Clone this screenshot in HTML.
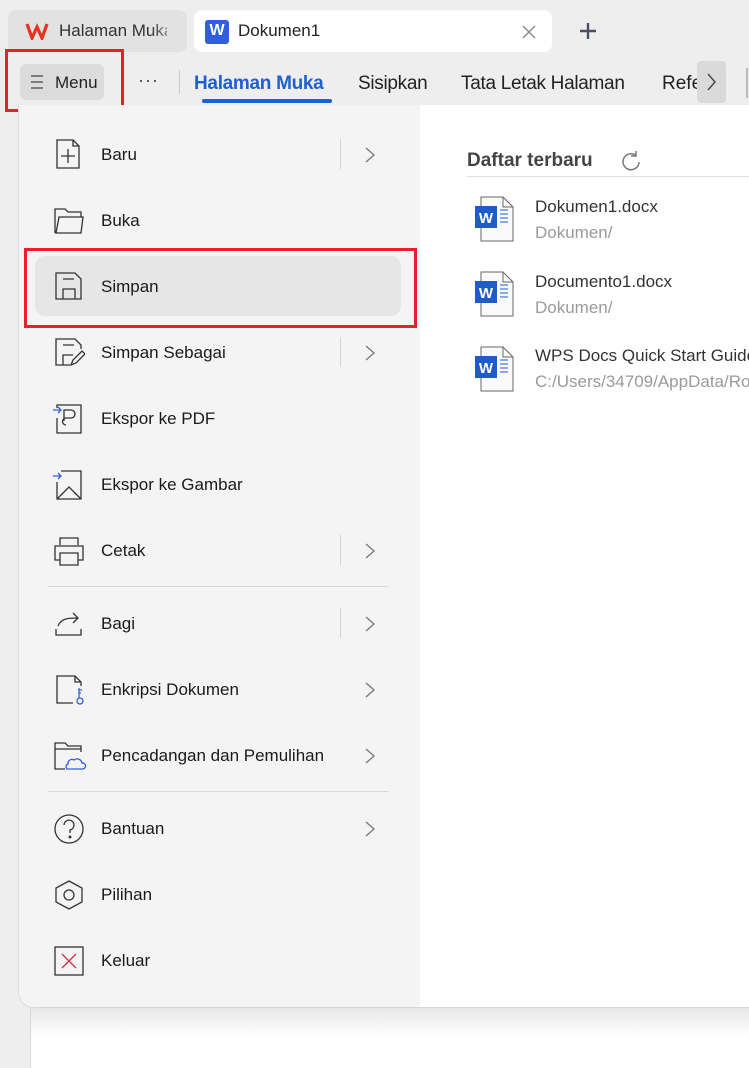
<!DOCTYPE html>
<html><head><style>
*{margin:0;padding:0;box-sizing:border-box}
html,body{width:749px;height:1068px;overflow:hidden}
body{background:#eeeeee;font-family:"Liberation Sans",sans-serif;position:relative;color:#222}
.abs{position:absolute}
.mi{position:absolute;left:0;width:400px;height:40px}
.mi .t{position:absolute;left:101px;top:11px;font-size:17px;color:#1a1a1a;white-space:nowrap}
.mi svg.ic{position:absolute;left:53px;top:5px}
.chev{position:absolute;left:364px;top:12px}
.vs{position:absolute;left:340px;top:5px;width:1px;height:30px;background:#d4d4d4}
.f{position:absolute;left:475px}
.fn{position:absolute;left:535px;font-size:17px;color:#333;white-space:nowrap;width:214px;overflow:hidden}
.fp{position:absolute;left:535px;font-size:17px;color:#9a9a9a;white-space:nowrap;width:214px;overflow:hidden}
</style></head><body>
<!-- tabs -->
<div class="abs" style="left:8px;top:10px;width:179px;height:42px;background:#e2e2e2;border-radius:8px"></div>
<svg class="abs" style="left:25px;top:22px" width="24" height="18" viewBox="0 0 24 18"><path d="M2 2 L7 16 L12 5 L17 16 L22 2" fill="none" stroke="#e8321e" stroke-width="3.2"/></svg>
<div class="abs" style="left:59px;top:21px;font-size:17px;color:#333;width:108px;overflow:hidden;white-space:nowrap">Halaman Muka</div>
<div class="abs" style="left:150px;top:14px;width:35px;height:34px;background:linear-gradient(90deg,rgba(226,226,226,0),#e2e2e2)"></div>
<div class="abs" style="left:194px;top:10px;width:358px;height:42px;background:#fff;border-radius:8px"></div>
<div class="abs" style="left:205px;top:20px;width:24px;height:24px;background:#2f5fe0;border-radius:3px;color:#fff;font-weight:bold;font-size:16px;text-align:center;line-height:22px">W</div>
<div class="abs" style="left:238px;top:21px;font-size:17px;color:#222">Dokumen1</div>
<svg class="abs" style="left:521px;top:24px" width="16" height="16"><path d="M2 2L14 14M14 2L2 14" stroke="#888" stroke-width="1.4"/></svg>
<svg class="abs" style="left:578px;top:21px" width="20" height="20"><path d="M10 2V18M2 10H18" stroke="#4a5060" stroke-width="2.4"/></svg>
<!-- ribbon -->
<div class="abs" style="left:20px;top:64px;width:84px;height:36px;background:#dcdcdc;border-radius:6px"></div>
<svg class="abs" style="left:30px;top:74px" width="14" height="16"><path d="M1 2H13M1 8H13M1 14H13" stroke="#444" stroke-width="1.2"/></svg>
<div class="abs" style="left:55px;top:73px;font-size:17px;color:#222">Menu</div>
<div class="abs" style="left:5px;top:49px;width:119px;height:63px;border:3px solid #e8202a"></div>
<div class="abs" style="left:138px;top:70px;font-size:18px;color:#444;letter-spacing:1px">···</div>
<div class="abs" style="left:179px;top:70px;width:1px;height:24px;background:#ccc"></div>
<div class="abs" style="left:194px;top:73px;font-size:19px;color:#1f5fd0;font-weight:bold;letter-spacing:-0.3px">Halaman Muka</div>
<div class="abs" style="left:202px;top:99px;width:130px;height:4px;background:#1f5fd0;border-radius:2px"></div>
<div class="abs" style="left:358px;top:73px;font-size:19px;color:#222;letter-spacing:-0.3px">Sisipkan</div>
<div class="abs" style="left:461px;top:73px;font-size:19px;color:#222;white-space:nowrap;letter-spacing:-0.3px">Tata Letak Halaman</div>
<div class="abs" style="left:662px;top:73px;font-size:19px;color:#222;width:36px;overflow:hidden;white-space:nowrap">Referensi</div>
<div class="abs" style="left:697px;top:61px;width:29px;height:42px;background:#dadada;border-radius:4px"></div>
<svg class="abs" style="left:705px;top:72px" width="12" height="20"><path d="M3 2L10 10L3 18" fill="none" stroke="#444" stroke-width="1.4"/></svg>
<div class="abs" style="left:746px;top:68px;width:2px;height:30px;background:#bbb"></div>
<!-- doc area -->
<div class="abs" style="left:30px;top:105px;width:719px;height:963px;background:#fff;border-left:1px solid #d8d8d8"></div>
<div class="abs" style="left:31px;top:1008px;width:718px;height:30px;background:linear-gradient(#e8e8e8,#fff)"></div>
<!-- popup -->
<div class="abs" style="left:18px;top:105px;width:731px;height:903px;background:#fff;border-radius:0 0 0 16px;border-left:1px solid #ddd;border-bottom:1px solid #d6d6d6;overflow:hidden">
 <div class="abs" style="left:0;top:0;width:401px;height:903px;background:#f4f4f4"></div>
</div>
<div class="abs" style="left:35px;top:256px;width:366px;height:60px;background:#e6e6e6;border-radius:10px"></div>
<div class="abs" style="left:24px;top:248px;width:393px;height:80px;border:3px solid #e8202a"></div>
<div class="abs" style="left:48px;top:586px;width:340px;height:1px;background:#d8d8d8"></div>
<div class="abs" style="left:48px;top:791px;width:340px;height:1px;background:#d8d8d8"></div>

<div class="mi" style="top:134px"><svg class="ic" width="30" height="30" viewBox="0 0 30 30" fill="none" stroke="#333" stroke-width="1.3"><path d="M4 1H20L26 7V29H4Z M20 1V7H26 M15 10V24 M8 17H22"/></svg><span class="t">Baru</span><div class="vs"></div><svg class="chev" width="12" height="18"><path d="M2 2L10 9L2 16" fill="none" stroke="#777" stroke-width="1.3"/></svg></div>
<div class="mi" style="top:200px"><svg class="ic" width="32" height="30" viewBox="0 0 32 30" fill="none" stroke="#333" stroke-width="1.3"><path d="M2 28V4H12L15 7H28V12 M2 28H28L30 12H6L3 28"/></svg><span class="t">Buka</span></div>
<div class="mi" style="top:266px"><svg class="ic" width="30" height="30" viewBox="0 0 30 30" fill="none" stroke="#333" stroke-width="1.3"><path d="M3 2H22L28 8V28H3Z M10 8H21 M10 28V18H22V28"/></svg><span class="t">Simpan</span></div>
<div class="mi" style="top:332px"><svg class="ic" width="32" height="32" viewBox="0 0 32 32" fill="none" stroke="#333" stroke-width="1.3"><path d="M17 28H3V2H22L28 8V12 M10 8H21 M10 28V18H20 M18 28L20 23L29 14L32 17L23 26Z"/></svg><span class="t">Simpan Sebagai</span><div class="vs"></div><svg class="chev" width="12" height="18"><path d="M2 2L10 9L2 16" fill="none" stroke="#777" stroke-width="1.3"/></svg></div>
<div class="mi" style="top:398px"><svg class="ic" width="32" height="32" viewBox="0 0 32 32" fill="none" stroke="#333" stroke-width="1.3"><path d="M4 15V30H28V2H4V5 M11 18V7H18A4 4 0 0 1 18 15H13A3 3 0 0 0 13 22"/><path d="M0 7H8M5 4L8 7L5 10" stroke="#2f5fe0"/></svg><span class="t">Ekspor ke PDF</span></div>
<div class="mi" style="top:464px"><svg class="ic" width="32" height="32" viewBox="0 0 32 32" fill="none" stroke="#333" stroke-width="1.3"><path d="M4 13V30H28V2H8 M4 30L16 18L28 30"/><path d="M0 7H8M5 4L8 7L5 10" stroke="#2f5fe0"/></svg><span class="t">Ekspor ke Gambar</span></div>
<div class="mi" style="top:530px"><svg class="ic" width="32" height="32" viewBox="0 0 32 32" fill="none" stroke="#333" stroke-width="1.3"><path d="M7 10V3H25V10 M7 25H2V11H30V25H25 M7 18H25V30H7Z"/></svg><span class="t">Cetak</span><div class="vs"></div><svg class="chev" width="12" height="18"><path d="M2 2L10 9L2 16" fill="none" stroke="#777" stroke-width="1.3"/></svg></div>
<div class="mi" style="top:603px"><svg class="ic" width="32" height="32" viewBox="0 0 32 32" fill="none" stroke="#333" stroke-width="1.3"><path d="M3 21V27H28V21 M5 18C8 10 16 10 25 10 M20 5L25 10L20 15"/></svg><span class="t">Bagi</span><div class="vs"></div><svg class="chev" width="12" height="18"><path d="M2 2L10 9L2 16" fill="none" stroke="#777" stroke-width="1.3"/></svg></div>
<div class="mi" style="top:669px"><svg class="ic" width="32" height="32" viewBox="0 0 32 32" fill="none" stroke="#333" stroke-width="1.3"><path d="M20 29H4V2H22L28 8V12 M22 2V8H28"/><path d="M26 14V24 M26 16H29 M26 19H28 M24 27A3 3 0 1 0 30 27A3 3 0 1 0 24 27" stroke="#2f5fe0"/></svg><span class="t">Enkripsi Dokumen</span><svg class="chev" width="12" height="18"><path d="M2 2L10 9L2 16" fill="none" stroke="#777" stroke-width="1.3"/></svg></div>
<div class="mi" style="top:735px"><svg class="ic" width="34" height="32" viewBox="0 0 34 32" fill="none" stroke="#333" stroke-width="1.3"><path d="M12 29H2V3H12L15 6H28V12 M2 9H28"/><path d="M14 29H30A3 3 0 0 0 29 23A5 5 0 0 0 21 20A4 4 0 0 0 15 24A3 3 0 0 0 14 29Z" stroke="#2f5fe0"/></svg><span class="t">Pencadangan dan Pemulihan</span><svg class="chev" width="12" height="18"><path d="M2 2L10 9L2 16" fill="none" stroke="#777" stroke-width="1.3"/></svg></div>
<div class="mi" style="top:808px"><svg class="ic" width="32" height="32" viewBox="0 0 32 32" fill="none" stroke="#333" stroke-width="1.3"><circle cx="16" cy="16" r="14"/><path d="M11 12A5 5 0 1 1 17 17V20"/><circle cx="17" cy="24" r="0.8" fill="#333"/></svg><span class="t">Bantuan</span><svg class="chev" width="12" height="18"><path d="M2 2L10 9L2 16" fill="none" stroke="#777" stroke-width="1.3"/></svg></div>
<div class="mi" style="top:874px"><svg class="ic" width="32" height="32" viewBox="0 0 32 32" fill="none" stroke="#333" stroke-width="1.3"><path d="M16 2L29 9V23L16 30L3 23V9Z"/><circle cx="16" cy="16" r="5"/></svg><span class="t">Pilihan</span></div>
<div class="mi" style="top:940px"><svg class="ic" width="32" height="32" viewBox="0 0 32 32" fill="none" stroke-width="1.3"><rect x="2" y="2" width="28" height="28" stroke="#333"/><path d="M9 9L23 23M23 9L9 23" stroke="#d0304a"/></svg><span class="t">Keluar</span></div>

<!-- right pane -->
<div class="abs" style="left:467px;top:150px;font-size:19px;font-weight:bold;color:#444">Daftar terbaru</div>
<svg class="abs" style="left:619px;top:149px" width="24" height="24" viewBox="0 0 24 24" fill="none" stroke="#777" stroke-width="1.5"><path d="M20 12A8 8 0 1 1 17 5.5 M17 1V6H12" transform="translate(0,1)"/></svg>
<div class="abs" style="left:467px;top:176px;width:282px;height:1px;background:#ddd"></div>

<svg class="f" style="top:196px" width="40" height="46" viewBox="0 0 40 46"><path d="M6 1H28L38 11V45H6Z" fill="#fafafa" stroke="#666" stroke-width="1"/><path d="M28 1V11H38" fill="none" stroke="#666"/><rect x="0" y="10" width="22" height="22" fill="#1f5cc8"/><text x="11" y="27" font-family="Liberation Sans" font-weight="bold" font-size="15" fill="#fff" text-anchor="middle">W</text><path d="M25 14H33M25 18H33M25 22H33M25 26H33" stroke="#1f5cc8" stroke-width="1"/></svg>
<div class="fn" style="top:197px">Dokumen1.docx</div><div class="fp" style="top:223px">Dokumen/</div>
<svg class="f" style="top:271px" width="40" height="46" viewBox="0 0 40 46"><path d="M6 1H28L38 11V45H6Z" fill="#fafafa" stroke="#666" stroke-width="1"/><path d="M28 1V11H38" fill="none" stroke="#666"/><rect x="0" y="10" width="22" height="22" fill="#1f5cc8"/><text x="11" y="27" font-family="Liberation Sans" font-weight="bold" font-size="15" fill="#fff" text-anchor="middle">W</text><path d="M25 14H33M25 18H33M25 22H33M25 26H33" stroke="#1f5cc8" stroke-width="1"/></svg>
<div class="fn" style="top:272px">Documento1.docx</div><div class="fp" style="top:298px">Dokumen/</div>
<svg class="f" style="top:346px" width="40" height="46" viewBox="0 0 40 46"><path d="M6 1H28L38 11V45H6Z" fill="#fafafa" stroke="#666" stroke-width="1"/><path d="M28 1V11H38" fill="none" stroke="#666"/><rect x="0" y="10" width="22" height="22" fill="#1f5cc8"/><text x="11" y="27" font-family="Liberation Sans" font-weight="bold" font-size="15" fill="#fff" text-anchor="middle">W</text><path d="M25 14H33M25 18H33M25 22H33M25 26H33" stroke="#1f5cc8" stroke-width="1"/></svg>
<div class="fn" style="top:346px">WPS Docs Quick Start Guide.docx</div><div class="fp" style="top:372px">C:/Users/34709/AppData/Roaming</div>
</body></html>
